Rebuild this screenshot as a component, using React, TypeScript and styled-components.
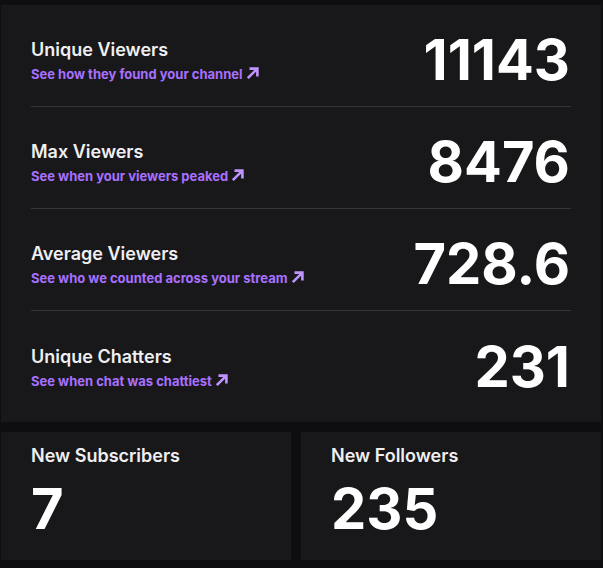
import React from "react";
import styled, { createGlobalStyle } from "styled-components";

const Global = createGlobalStyle`
  html, body { margin: 0; padding: 0; background: #0e0e10; }
  body { font-family: Inter, "Noto Sans", sans-serif; -webkit-font-smoothing: antialiased; }
`;

const Page = styled.div`
  width: 603px;
  height: 568px;
  box-sizing: border-box;
  padding: 5px 2px 0 1px;
  display: flex;
  flex-direction: column;
  gap: 10px;
  background: #0e0e10;
`;

const Panel = styled.div`
  background: #18181b;
  padding: 0 30px 9px 30px;
  display: flex;
  flex-direction: column;
`;

const Row = styled.div<{ $last?: boolean }>`
  height: 102px;
  display: flex;
  align-items: center;
  justify-content: space-between;
  padding-top: 9px;
  box-sizing: border-box;
  border-bottom: ${(p) => (p.$last ? "none" : "1px solid #35353b")};
`;

const Info = styled.div`
  display: flex;
  flex-direction: column;
  gap: 4px;
  padding-top: 2px;
`;

const Title = styled.div`
  color: #efeff1;
  font-size: 18px;
  font-weight: 600;
  line-height: 22px;
`;

const LinkText = styled.a`
  color: #a970ff;
  font-size: 13px;
  font-weight: 700;
  line-height: 18px;
  text-decoration: none;
  display: inline-flex;
  align-items: flex-end;
  gap: 3px;
`;

const Arrow = styled.svg`
  width: 14px;
  height: 14px;
  margin-bottom: 3px;
  color: #bf94ff;
`;

const BigNumber = styled.div`
  color: #ffffff;
  font-size: 56px;
  font-weight: 700;
  line-height: 60px;
  margin-right: 1px;
`;

const Cards = styled.div`
  display: grid;
  grid-template-columns: 290px 300px;
  gap: 10px;
`;

const Card = styled.div`
  background: #18181b;
  height: 128px;
  box-sizing: border-box;
  padding: 13px 30px 0 30px;
  display: flex;
  flex-direction: column;
  gap: 12px;
`;

const ArrowIcon = () => (
  <Arrow viewBox="0 0 14 14" fill="none">
    <path d="M1.8 12.2 L11.2 2.8 M3.5 2.6 H11.4 V10.5" stroke="currentColor" strokeWidth="2.6" strokeLinecap="butt" />
  </Arrow>
);

const rows = [
  { title: "Unique Viewers", link: "See how they found your channel", value: "11143" },
  { title: "Max Viewers", link: "See when your viewers peaked", value: "8476" },
  { title: "Average Viewers", link: "See who we counted across your stream", value: "728.6" },
  { title: "Unique Chatters", link: "See when chat was chattiest", value: "231" },
];

export default function App() {
  return (
    <>
      <Global />
      <Page>
        <Panel>
          {rows.map((r, i) => (
            <Row key={r.title} $last={i === rows.length - 1}>
              <Info>
                <Title>{r.title}</Title>
                <LinkText href="#">
                  {r.link}
                  <ArrowIcon />
                </LinkText>
              </Info>
              <BigNumber>{r.value}</BigNumber>
            </Row>
          ))}
        </Panel>
        <Cards>
          <Card>
            <Title>New Subscribers</Title>
            <BigNumber>7</BigNumber>
          </Card>
          <Card>
            <Title>New Followers</Title>
            <BigNumber>235</BigNumber>
          </Card>
        </Cards>
      </Page>
    </>
  );
}
